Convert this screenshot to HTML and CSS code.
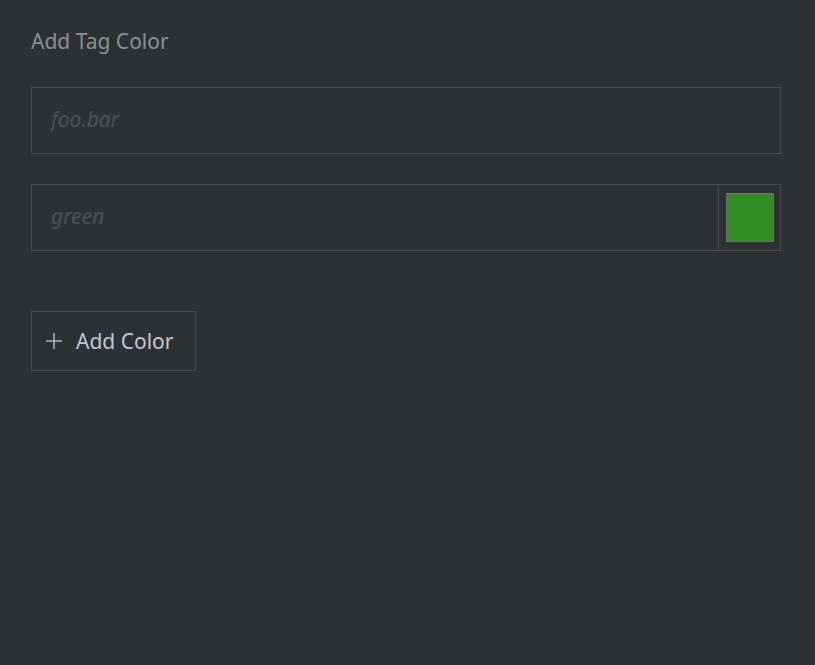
FILE: index.html
```html
<!DOCTYPE html>
<html lang="en">
<head>
  <meta charset="UTF-8" />
  <title>Add Tag Color</title>
  <link rel="stylesheet" href="styles.css">
</head>
<body>
  <div class="panel">
    <h1 class="titulo">Add Tag Color</h1>

    <div class="campo">
      <input class="entrada" type="text" placeholder="foo.bar" />
    </div>

    <div class="campo campo-cor">
      <input class="entrada" type="text" placeholder="green" />
      <div class="amostra-box">
        <div class="amostra"></div>
      </div>
    </div>

    <button class="botao" type="button">
      <svg class="mais" width="18" height="18" viewBox="0 0 18 18">
        <path d="M9 1v16M1 9h16" stroke="currentColor" stroke-width="1.6" fill="none" />
      </svg>
      <span>Add Color</span>
    </button>
  </div>
</body>
</html>
```

FILE: styles.css
```css
* {
  margin: 0;
  padding: 0;
  box-sizing: border-box;
}

html, body {
  height: 100%;
}

body {
  background-color: #2e3134;
  font-family: "Noto Sans", "Open Sans", sans-serif;
  color: #c1c8d0;
}

.panel {
  padding: 27px 34px 0 31px;
  display: flex;
  flex-direction: column;
  align-items: flex-start;
}

.titulo {
  font-size: 21px;
  font-weight: normal;
  line-height: 28px;
  color: #8a9097;
  margin-bottom: 32px;
}

.campo {
  width: 750px;
  height: 67px;
  border: 1px solid #4b4e52;
  display: flex;
  margin-bottom: 30px;
}

.entrada {
  flex: 1;
  min-width: 0;
  height: 100%;
  background: transparent;
  border: none;
  outline: none;
  padding: 0 19px 4px;
  font-family: "Noto Sans", "Open Sans", sans-serif;
  font-size: 21px;
  font-style: italic;
  color: #c1c8d0;
}

.entrada::placeholder {
  color: #4d5256;
  opacity: 1;
}

.amostra-box {
  width: 62px;
  border-left: 1px solid #4b4e52;
  display: flex;
  align-items: center;
  padding-left: 7px;
}

.amostra {
  width: 48px;
  height: 49px;
  background-color: #348a24;
  border: 1px solid #6a736a;
}

.campo-cor {
  margin-bottom: 60px;
}

.botao {
  width: 165px;
  height: 60px;
  background: transparent;
  border: 1px solid #4b4e52;
  color: #c1c8d0;
  font-family: "Noto Sans", "Open Sans", sans-serif;
  font-size: 21px;
  display: flex;
  align-items: center;
  padding-left: 13px;
  gap: 13px;
  cursor: pointer;
}

.mais {
  color: #aab0b7;
}
```
